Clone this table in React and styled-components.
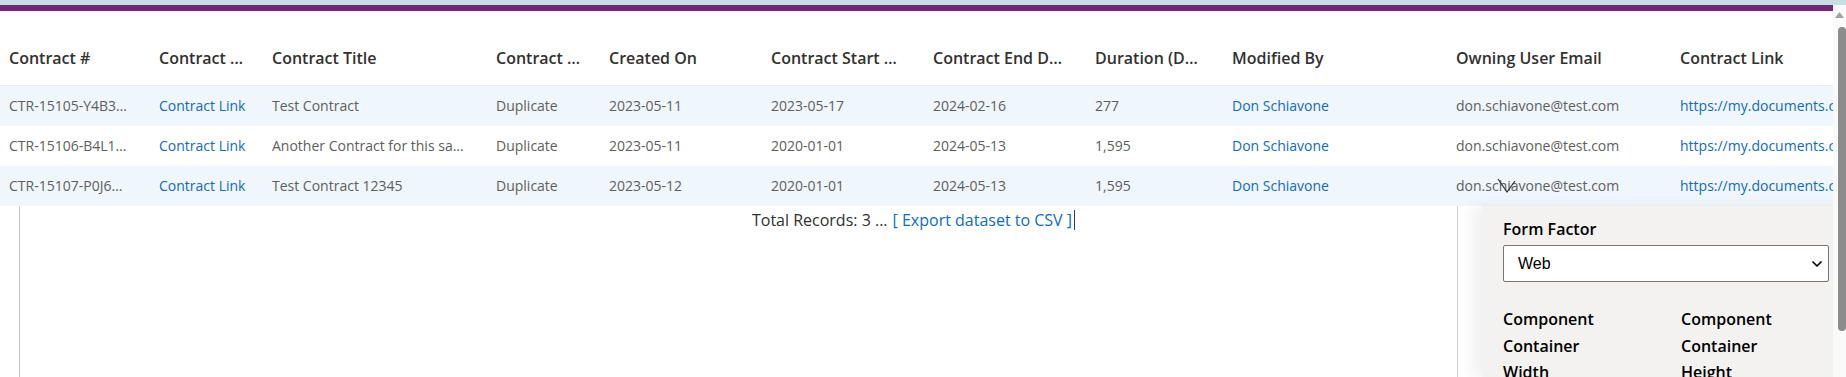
import React from "react";
import styled, { createGlobalStyle } from "styled-components";
import { ChevronDown } from "lucide-react";

const GlobalStyle = createGlobalStyle`
  html, body {
    margin: 0;
    padding: 0;
    background: #ffffff;
    overflow: hidden;
  }
  * { box-sizing: border-box; }
`;

const COLUMNS = "150px 113px 224px 113px 162px 162px 162px 137px 224px 224px 320px";

const headers = [
  "Contract #",
  "Contract …",
  "Contract Title",
  "Contract …",
  "Created On",
  "Contract Start …",
  "Contract End D…",
  "Duration (D…",
  "Modified By",
  "Owning User Email",
  "Contract Link",
];

const rows = [
  {
    id: "CTR-15105-Y4B3…",
    title: "Test Contract",
    created: "2023-05-11",
    start: "2023-05-17",
    end: "2024-02-16",
    duration: "277",
  },
  {
    id: "CTR-15106-B4L1…",
    title: "Another Contract for this sa…",
    created: "2023-05-11",
    start: "2020-01-01",
    end: "2024-05-13",
    duration: "1,595",
  },
  {
    id: "CTR-15107-P0J6…",
    title: "Test Contract 12345",
    created: "2023-05-12",
    start: "2020-01-01",
    end: "2024-05-13",
    duration: "1,595",
  },
];

const Page = styled.div`
  width: 100vw;
  height: 377px;
  display: flex;
  flex-direction: column;
  font-family: "Segoe UI", "Open Sans", sans-serif;
`;

const TopStrip = styled.div`
  height: 5px;
  background: #c6dee4;
  flex-shrink: 0;
`;

const Body = styled.div`
  flex: 1;
  display: flex;
  min-height: 0;
`;

const Content = styled.div`
  flex: 1;
  position: relative;
  display: flex;
  flex-direction: column;
  overflow: hidden;
`;

const BrandBar = styled.div`
  height: 6px;
  background: #742774;
  flex-shrink: 0;
`;

const Grid = styled.div`
  display: flex;
  flex-direction: column;
  flex-shrink: 0;
`;

const HeaderRow = styled.div`
  display: grid;
  grid-template-columns: ${COLUMNS};
  height: 75px;
  align-items: end;
  padding-bottom: 15px;
  border-bottom: 1px solid #edebe9;
`;

const HeaderCell = styled.div`
  padding-left: 9px;
  font-size: 16px;
  font-weight: 600;
  line-height: 24px;
  color: #323130;
  white-space: nowrap;
  overflow: hidden;
`;

const Row = styled.div`
  display: grid;
  grid-template-columns: ${COLUMNS};
  height: 40px;
  align-items: center;
  background: ${(p) => (p.$alt ? "#eff6fc" : "#ffffff")};
`;

const Cell = styled.div`
  padding-left: 9px;
  font-size: 14px;
  line-height: 20px;
  color: ${(p) => (p.$link ? "#0f6cbd" : "#605e5c")};
  white-space: nowrap;
  overflow: hidden;
`;

const Lower = styled.div`
  flex: 1;
  position: relative;
`;

const Frame = styled.div`
  margin-left: 19px;
  height: 100%;
  border-left: 1px solid #c8c6c4;
`;

const Footer = styled.div`
  display: flex;
  justify-content: center;
  align-items: center;
  padding: 3px 26px 0 0;
  font-size: 16px;
  line-height: 22px;
  color: #323130;
  white-space: nowrap;
`;

const ExportLink = styled.span`
  color: #0f6cbd;
  margin-left: 5px;
`;

const Caret = styled.span`
  display: inline-block;
  width: 1px;
  height: 20px;
  margin-left: 2px;
  background: #1a3f7a;
`;

const Panel = styled.div`
  position: absolute;
  top: 0;
  left: 1457px;
  right: 0;
  bottom: 0;
  display: flex;
  border-left: 1px solid #d2d0ce;
  padding-left: 24px;
`;

const PanelBody = styled.div`
  flex: 1;
  background: #f3f2f1;
  box-shadow: -10px 0 14px rgba(0, 0, 0, 0.06);
  padding: 11px 4px 0 21px;
`;

const FieldLabel = styled.div`
  font-size: 16px;
  font-weight: 600;
  line-height: 24px;
  color: #000000;
`;

const SelectWrap = styled.div`
  position: relative;
  margin-top: 4px;
  width: 326px;
`;

const Select = styled.select`
  appearance: none;
  width: 100%;
  height: 37px;
  padding: 0 30px 0 14px;
  border: 1px solid #767676;
  border-radius: 2px;
  background: #ffffff;
  font-family: "Liberation Sans", Arial, sans-serif;
  font-size: 16px;
  color: #000000;
  outline: none;
`;

const SelectChevron = styled(ChevronDown)`
  position: absolute;
  right: 4px;
  top: 11px;
  pointer-events: none;
`;

const Dimensions = styled.div`
  display: grid;
  grid-template-columns: 178px 178px;
  margin-top: 24px;
`;

const DimLabel = styled.div`
  font-size: 16px;
  font-weight: 600;
  line-height: 26.5px;
  color: #000000;
`;

const CursorMark = styled.svg`
  position: absolute;
  left: 1497px;
  top: 173px;
`;

const Scrollbar = styled.div`
  width: 13px;
  flex-shrink: 0;
  background: #fafafa;
  display: flex;
  flex-direction: column;
  align-items: flex-end;
  padding-top: 7px;
`;

const ScrollArrow = styled.svg`
  margin-right: 2px;
`;

const Thumb = styled.div`
  margin-top: 9px;
  width: 8px;
  height: 304px;
  border-radius: 4px;
  background: #8c8c8c;
`;

export default function App() {
  return (
    <>
      <GlobalStyle />
      <Page>
        <TopStrip />
        <Body>
          <Content>
            <BrandBar />
            <Grid>
              <HeaderRow>
                {headers.map((h, i) => (
                  <HeaderCell key={i}>{h}</HeaderCell>
                ))}
              </HeaderRow>
              {rows.map((r, i) => (
                <Row key={r.id} $alt={i % 2 === 0}>
                  <Cell>{r.id}</Cell>
                  <Cell $link>Contract Link</Cell>
                  <Cell>{r.title}</Cell>
                  <Cell>Duplicate</Cell>
                  <Cell>{r.created}</Cell>
                  <Cell>{r.start}</Cell>
                  <Cell>{r.end}</Cell>
                  <Cell>{r.duration}</Cell>
                  <Cell $link>Don Schiavone</Cell>
                  <Cell>don.schiavone@test.com</Cell>
                  <Cell $link>https://my.documents.com/contracts/view</Cell>
                </Row>
              ))}
            </Grid>
            <Lower>
              <Frame>
                <Footer>
                  Total Records: 3 ...
                  <ExportLink>[ Export dataset to CSV ]</ExportLink>
                  <Caret />
                </Footer>
              </Frame>
              <Panel>
                <PanelBody>
                  <FieldLabel>Form Factor</FieldLabel>
                  <SelectWrap>
                    <Select defaultValue="web">
                      <option value="web">Web</option>
                      <option value="tablet">Tablet</option>
                      <option value="phone">Phone</option>
                    </Select>
                    <SelectChevron size={16} strokeWidth={2.6} color="#000" />
                  </SelectWrap>
                  <Dimensions>
                    <div>
                      <DimLabel>Component</DimLabel>
                      <DimLabel>Container</DimLabel>
                      <DimLabel>Width</DimLabel>
                    </div>
                    <div>
                      <DimLabel>Component</DimLabel>
                      <DimLabel>Container</DimLabel>
                      <DimLabel>Height</DimLabel>
                    </div>
                  </Dimensions>
                </PanelBody>
              </Panel>
            </Lower>
            <CursorMark width="20" height="16" viewBox="0 0 20 16">
              <polyline points="1,1 10,14 18,3" fill="none" stroke="#323130" strokeWidth="1.2" />
            </CursorMark>
          </Content>
          <Scrollbar>
            <ScrollArrow width="9" height="6" viewBox="0 0 9 6">
              <polygon points="4.5,0 9,6 0,6" fill="#a3a3a3" />
            </ScrollArrow>
            <Thumb />
          </Scrollbar>
        </Body>
      </Page>
    </>
  );
}
